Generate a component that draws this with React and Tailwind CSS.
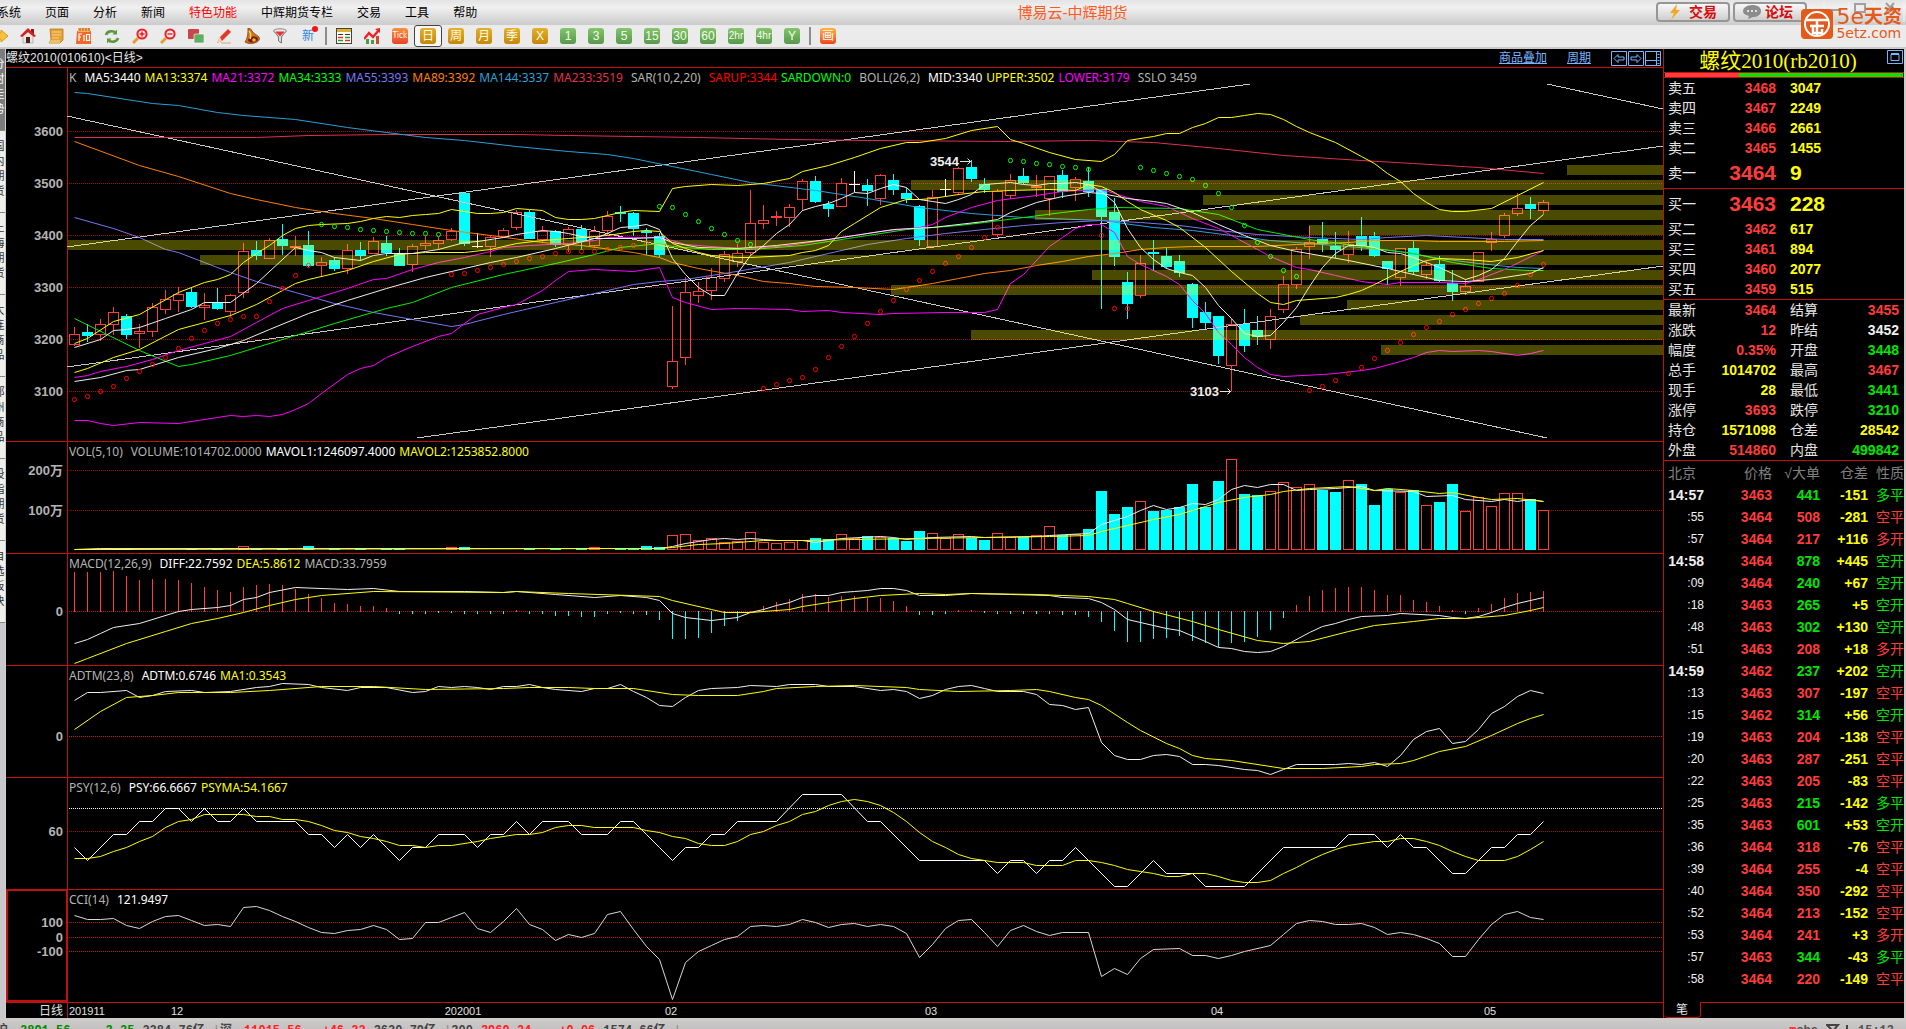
import React, { useState } from "react";

// bar i sits at x = 74 + 13 * i, prices are already in screen units
const barX = (i) => 74 + 13 * i;

// [kind, high, open/close top, open/close bottom, low, volume top]
const bars = [
  ["r", 327, 334, 345, 346, 549], ["c", 324, 332, 336, 342, 549], ["r", 319, 324, 335, 341, 549],
  ["r", 307, 312, 325, 335, 548], ["c", 314, 316, 335, 339, 548], ["r", 324, 331, 334, 348, 549],
  ["r", 303, 307, 332, 337, 549], ["r", 290, 299, 310, 314, 549], ["r", 287, 294, 301, 312, 549],
  ["c", 287, 292, 307, 308, 549], ["r", 293, 305, 308, 320, 549], ["c", 288, 303, 309, 310, 549],
  ["r", 294, 295, 312, 317, 549], ["r", 243, 251, 293, 298, 546], ["c", 241, 250, 256, 260, 549],
  ["r", 238, 240, 259, 259, 549], ["c", 224, 239, 246, 255, 549], ["r", 236, 246, 248, 256, 549],
  ["c", 231, 245, 266, 267, 546], ["r", 257, 262, 266, 276, 549], ["c", 257, 260, 269, 271, 549],
  ["r", 244, 250, 269, 274, 549], ["c", 242, 250, 256, 261, 549], ["r", 237, 241, 254, 254, 549],
  ["c", 236, 243, 253, 256, 549], ["c", 248, 253, 266, 266, 549], ["r", 244, 246, 265, 272, 549],
  ["r", 236, 243, 246, 250, 549], ["r", 237, 240, 244, 249, 549], ["r", 228, 231, 240, 241, 547],
  ["c", 192, 193, 244, 246, 547], ["w", 233, 246, 247, 247, 549], ["r", 235, 237, 247, 257, 549],
  ["r", 228, 230, 237, 237, 549], ["r", 210, 212, 228, 230, 549], ["c", 210, 212, 239, 239, 549],
  ["r", 226, 231, 240, 243, 549], ["c", 230, 231, 245, 247, 549], ["r", 227, 229, 245, 252, 549],
  ["c", 225, 229, 242, 250, 549], ["r", 226, 231, 246, 247, 547], ["r", 211, 216, 231, 235, 549],
  ["c", 206, 212, 214, 222, 549], ["c", 212, 213, 229, 236, 549], ["c", 228, 231, 233, 255, 546],
  ["c", 233, 236, 255, 257, 547], ["r", 306, 361, 387, 389, 535], ["r", 277, 292, 358, 365, 534],
  ["r", 282, 291, 296, 303, 540], ["r", 268, 277, 291, 300, 538], ["r", 251, 254, 279, 282, 542],
  ["r", 244, 253, 262, 267, 541], ["r", 190, 223, 253, 255, 532], ["r", 205, 220, 224, 229, 542],
  ["r", 211, 216, 218, 226, 543], ["r", 204, 207, 218, 227, 542], ["r", 179, 181, 200, 211, 540],
  ["c", 176, 181, 202, 203, 538], ["c", 201, 204, 209, 217, 539], ["r", 178, 183, 207, 207, 534],
  ["w", 171, 184, 185, 191, 538], ["c", 179, 185, 191, 206, 536], ["r", 174, 175, 199, 205, 537],
  ["c", 174, 180, 190, 195, 538], ["c", 188, 193, 199, 203, 541], ["c", 205, 206, 240, 246, 531],
  ["r", 190, 197, 247, 248, 533], ["w", 179, 189, 190, 196, 538], ["r", 167, 168, 193, 195, 534],
  ["c", 160, 167, 179, 182, 538], ["c", 178, 184, 190, 193, 540], ["r", 189, 191, 235, 237, 533],
  ["r", 174, 180, 196, 199, 537], ["c", 168, 176, 183, 184, 537], ["r", 175, 186, 188, 197, 535],
  ["r", 176, 176, 199, 216, 526], ["c", 170, 175, 192, 198, 535], ["r", 177, 179, 188, 201, 534],
  ["c", 167, 181, 192, 197, 529], ["c", 189, 189, 217, 309, 491], ["c", 198, 212, 257, 266, 514],
  ["c", 272, 282, 304, 319, 507], ["r", 255, 263, 296, 298, 501], ["c", 240, 252, 254, 271, 511],
  ["c", 248, 256, 267, 269, 510], ["c", 255, 261, 273, 277, 507], ["c", 283, 284, 318, 328, 484],
  ["c", 302, 312, 323, 329, 507], ["c", 316, 316, 356, 364, 481], ["r", 319, 324, 366, 391, 459],
  ["c", 309, 324, 346, 352, 494], ["c", 316, 330, 337, 345, 495], ["r", 309, 316, 340, 349, 491],
  ["r", 276, 284, 310, 313, 482], ["r", 247, 249, 285, 289, 487], ["r", 226, 242, 247, 259, 484],
  ["c", 222, 239, 244, 252, 490], ["c", 232, 246, 250, 258, 492], ["r", 231, 244, 255, 263, 480],
  ["c", 217, 236, 246, 251, 484], ["c", 232, 236, 256, 257, 505], ["c", 261, 261, 269, 285, 489],
  ["r", 248, 248, 278, 286, 492], ["c", 241, 248, 272, 275, 490], ["r", 261, 265, 275, 279, 505],
  ["c", 256, 264, 281, 282, 502], ["c", 270, 283, 292, 301, 484], ["r", 279, 286, 292, 295, 511],
  ["r", 252, 252, 282, 282, 497], ["r", 232, 239, 243, 251, 506], ["r", 213, 215, 236, 238, 493],
  ["r", 193, 208, 214, 216, 493], ["c", 197, 204, 209, 219, 499], ["r", 200, 202, 211, 214, 510],
];

const bands = [
  [1567, 165], [911, 180], [1203, 195], [1035, 210], [1309, 225], [68, 240], [200, 255],
  [1092, 270], [891, 285], [1347, 300], [1300, 315], [971, 330], [1381, 345],
];

// first bar, colour, then one y per bar
const sar = [
  [0, "#ff0000", [399, 396, 391, 386, 378, 371, 364, 357, 348, 338, 330, 323, 319, 316, 316, 301, 288, 275, 265]],
  [19, "#00ff00", [224, 226, 227, 229, 230, 231, 232, 233, 233, 234]],
  [29, "#ff0000", [274, 273, 270, 267, 264, 261, 258, 256, 253, 251, 251, 251, 249, 247, 245, 243]],
  [45, "#00ff00", [206, 207, 214, 221, 228, 234, 240, 244]],
  [53, "#ff0000", [388, 384, 380, 377, 369, 357, 346, 336, 323, 311, 300, 289, 280, 271, 263, 256, 247, 237, 227]],
  [72, "#00ff00", [160, 161, 163, 164, 166, 167, 169]],
  [79, "#ff0000", [235, 308, 308]],
  [82, "#00ff00", [167, 170, 173, 176, 179, 185, 193, 207, 225, 242, 256, 270, 276]],
  [95, "#ff0000", [390, 386, 380, 373, 367, 358, 350, 342, 334, 327, 321, 314, 309, 303, 298, 293, 285, 274, 264]],
];

const priceLines = [
  // MA233, MA144, MA89, MA55, MA34
  ["#e03050", "0,137 14,137 18,135 24,134 34,134 38,135 43,136 48,137 55,139 61,140 72,141 78,140 83,142 88,148 93,155 99,160 103,163 108,167 113,173"],
  ["#2ba0d8", "0,92 1,93 4,99 6,103 8,105 11,112 13,115 17,119 21,127 24,132 27,137 30,140 34,146 38,151 41,154 43,158 46,166 49,174 52,182 57,190 61,198 65,207 69,213 73,217 79,220 83,227 86,230 89,235 92,240 95,243 98,246 102,251 105,258 108,263 111,267 113,268"],
  ["#ff8000", "0,141 5,165 8,176 12,193 14,199 17,207 20,213 23,218 26,224 29,230 32,235 36,242 39,245 43,252 45,257 46,262 48,268 51,275 53,281 55,283 57,286 60,287 63,289 64,287 66,283 68,278 70,273 72,270 74,265 76,261 78,256 80,253 82,249 84,247 86,246 91,246 94,244 98,242 100,240 103,240 105,241 110,241 113,240"],
  ["#7878f0", "0,217 3,228 5,237 7,249 8,252 10,262 12,272 14,281 17,292 20,303 23,312 26,319 29,326 30,324 33,314 37,302 40,293 43,284 45,281 47,279 50,273 55,262 58,253 61,244 64,238 67,233 70,229 73,225 76,222 79,220 82,222 85,225 88,230 91,234 95,237 99,239 101,237 104,235 107,237 110,239 113,239"],
  ["#00f000", "0,318 5,350 8,366 9,364 12,355 14,347 17,335 20,323 24,308 26,302 29,287 33,274 37,263 40,254 42,247 45,243 46,246 49,249 52,249 56,245 60,237 64,229 68,225 70,222 73,217 76,212 78,209 80,207 85,208 88,214 91,229 95,239 98,244 100,248 103,253 106,262 109,268 112,270 113,270"],
  // MA21, MA13, MA5
  ["#ff00ff", "0,377 1,375 2,371 4,366 6,359 8,350 10,343 12,336 14,322 16,308 18,300 19,296 21,288 23,279 24,278 26,269 28,262 30,257 32,251 33,247 35,245 38,243 40,240 41,237 45,237 46,240 47,244 50,247 52,248 55,245 59,237 62,231 65,227 66,224 67,217 69,207 71,200 74,195 76,191 79,189 81,197 82,201 84,206 86,218 88,228 91,249 92,256 94,267 95,269 97,275 99,281 101,284 102,282 105,282 107,283 108,279 110,269 113,250"],
  ["#ffff00", "0,372 1,368 3,357 5,349 8,329 10,322 12,315 14,304 17,283 18,279 20,273 21,270 23,261 25,254 27,252 30,252 32,249 34,243 36,240 38,238 41,235 43,231 44,230 45,231 46,243 47,248 48,252 49,255 51,257 52,257 55,255 56,252 57,250 58,245 59,231 60,223 62,207 64,199 65,199 66,198 68,194 70,191 72,190 75,189 77,190 78,184 79,186 80,192 81,201 82,209 84,220 85,227 87,247 89,271 91,293 92,302 93,304 94,300 97,297 98,294 99,290 100,284 102,271 103,265 104,260 105,258 107,259 109,261 111,257 113,250"],
  ["#f0f0f0", "0,347 2,339 3,330 4,329 5,327 7,318 9,309 10,302 12,302 14,283 17,247 18,250 19,252 20,257 22,260 23,255 24,253 26,253 27,251 28,249 30,242 31,241 33,237 34,234 35,232 36,230 37,231 38,233 39,236 40,238 41,233 42,227 43,226 44,224 45,229 46,258 47,274 48,287 49,295 50,295 51,273 52,255 53,245 54,233 55,224 56,210 57,206 58,203 59,198 60,192 61,193 62,188 63,184 64,187 65,199 66,201 67,203 68,199 69,194 70,184 71,183 72,182 73,184 74,185 75,183 76,183 77,182 78,184 79,191 80,202 81,228 82,247 83,259 84,268 85,272 86,275 87,287 88,305 89,318 90,333 91,336 92,335 93,322 94,307 95,286 96,267 97,253 98,245 99,245 100,247 101,252 102,253 103,257 104,262 105,267 106,273 107,279 108,275 109,269 110,258 111,241 112,225 113,214"],
  // BOLL mid, upper, lower
  ["#f0f0f0", "0,381 2,377 4,370 5,369 8,357 11,348 13,340 15,329 18,313 21,300 24,288 27,277 30,268 32,262 34,257 37,248 40,238 43,238 45,237 46,242 48,247 51,248 54,245 58,239 63,229 66,227 70,221 71,219 72,212 74,202 76,196 78,192 79,193 81,198 83,201 84,203 86,212 88,224 90,235 92,245 94,251 98,260 101,268 103,274 105,280 107,281 109,279 112,273 113,267"],
  ["#ffff00", "0,343 1,338 3,321 5,314 8,292 10,282 11,279 12,274 13,262 14,253 15,245 16,235 17,228 18,225 19,224 21,223 22,221 23,218 24,216 25,217 26,215 27,214 28,213 29,209 30,211 31,213 32,213 33,212 34,208 35,209 36,210 37,217 38,219 39,219 40,218 41,215 42,212 43,210 45,211 46,188 47,186 49,184 51,185 53,183 55,178 56,171 58,165 60,157 62,148 64,142 65,142 67,138 69,130 71,126 72,139 73,143 75,152 77,159 79,161 80,154 81,140 83,136 84,133 85,133 86,127 87,123 88,117 89,117 90,115 91,113 92,114 93,119 94,126 95,132 97,142 99,156 100,163 101,173 102,181 103,193 104,202 105,209 106,211 107,211 109,208 111,195 113,182"],
  ["#ff00ff", "0,420 1,420 2,423 3,425 5,422 8,423 11,417 12,415 13,416 14,415 15,416 16,414 17,409 18,403 19,393 21,374 22,368 23,365 24,357 26,346 28,336 29,333 30,323 31,314 33,307 34,304 36,290 37,280 38,271 40,269 43,271 45,267 46,297 47,302 49,309 51,308 55,309 56,311 58,310 59,312 62,314 63,313 67,312 70,312 71,309 72,283 73,274 75,246 76,237 77,228 78,224 79,224 80,232 81,256 82,264 83,270 84,276 85,284 86,300 87,313 88,332 89,344 90,357 91,367 92,374 93,376 96,374 97,373 99,370 100,368 102,361 103,357 104,352 105,350 106,351 108,350 109,351 111,355 112,353 113,350"],
];

const trendLines = [
  [67, 116, 1547, 438], [67, 247, 1250, 84], [67, 367, 1663, 146], [417, 438, 1663, 266], [1547, 84, 1663, 109],
];

const volLines = [
  ["#f0f0f0", "0,549 45,548 46,546 47,543 48,541 49,539 50,538 51,539 52,538 53,539 54,540 56,540 57,542 59,538 62,536 63,537 64,539 66,537 69,536 70,537 74,536 75,535 78,533 79,524 80,520 81,516 82,510 83,505 84,509 85,507 86,503 87,504 88,499 89,489 90,485 91,487 92,484 93,484 94,490 95,489 97,488 99,486 100,490 103,491 104,496 106,495 107,499 109,501 110,499 111,501 112,499 113,501"],
  ["#ffff00", "0,549 2,548 45,548 46,547 48,544 50,543 53,540 56,540 60,539 65,538 70,537 75,536 78,535 79,531 81,525 83,519 85,514 86,510 87,506 88,502 90,497 92,494 93,491 95,488 98,486 100,490 101,488 103,490 105,493 106,492 108,497 109,499 111,498 113,501"],
];

const macdHist = [
  572, 572, 572, 571, 576, 580, 579, 579, 580, 583, 587, 590, 592, 587, 585, 584, 585, 589, 594, 598, 603, 604, 606,
  606, 608, 613, 613, 613, 612, 612, 613, 613, 613, 613, 610, 613, 613, 615, 615, 616, 616, 613, 612, 613, 614, 619,
  638, 638, 637, 632, 625, 620, 611, 606, 602, 599, 594, 594, 597, 596, 596, 598, 598, 601, 606, 614, 614, 613, 610,
  610, 612, 613, 613, 613, 613, 613, 614, 614, 616, 621, 630, 641, 641, 638, 637, 635, 640, 642, 646, 642, 641, 636,
  629, 617, 605, 596, 590, 588, 587, 587, 590, 595, 595, 600, 602, 606, 610, 613, 608, 604, 598, 593, 592, 591,
];

const macdLines = [
  ["#f0f0f0", "0,643 1,639 2,633 3,627 5,623 8,611 9,609 11,607 12,605 13,599 14,597 15,592 17,587 21,589 23,588 25,591 30,591 33,592 34,591 37,594 40,597 42,595 44,597 45,600 46,613 47,617 49,620 51,617 52,612 53,609 54,605 55,602 56,597 57,595 58,595 59,592 60,591 61,590 62,588 63,588 64,590 65,595 67,595 69,593 72,594 75,595 76,597 78,598 79,602 80,609 81,619 84,628 85,630 87,641 88,647 89,648 90,651 91,652 92,651 93,646 95,632 96,626 97,623 98,619 99,616 101,615 102,613 105,615 106,617 107,618 108,616 109,612 110,607 111,603 113,597"],
  ["#ffff00", "0,663 1,658 4,643 7,631 9,623 11,618 13,612 15,605 17,599 19,595 23,591 33,592 34,591 38,593 45,596 46,600 49,609 50,612 52,612 55,609 56,606 58,602 60,598 62,595 65,593 67,594 69,593 74,594 78,596 80,599 81,603 83,611 86,621 88,629 91,640 93,643 95,641 98,631 100,625 103,621 105,618 107,618 110,615 112,610 113,607"],
];

const adtmLines = [
  ["#f0f0f0", "0,700 1,692 2,692 4,690 5,697 6,695 7,691 9,690 10,692 12,691 14,687 15,686 16,683 18,684 19,687 21,690 22,687 24,687 26,692 27,691 28,686 29,687 30,686 31,687 32,689 33,686 34,686 35,684 36,687 37,689 39,691 40,688 41,688 42,684 43,691 44,697 45,705 46,706 47,697 48,690 49,688 51,687 52,685 54,686 55,684 57,684 58,686 60,686 62,690 63,689 64,691 65,698 66,695 67,689 68,686 69,685 70,688 71,691 73,691 74,694 75,704 76,705 77,709 78,707 79,742 80,755 81,759 82,759 83,755 84,754 85,756 86,764 87,764 88,765 90,769 91,770 92,774 93,769 94,764 97,764 98,763 99,764 100,762 101,766 102,755 103,739 104,731 105,728 106,743 107,741 108,729 109,713 110,706 111,696 112,690 113,693"],
  ["#ffff00", "0,729 2,711 4,697 6,695 8,692 12,692 15,690 19,686 23,686 27,689 33,688 35,687 38,687 40,688 43,688 46,694 48,695 51,695 53,691 54,688 57,686 60,685 64,687 65,689 68,691 72,690 74,689 75,691 77,697 78,699 79,705 81,722 82,730 84,743 85,748 86,755 87,758 89,760 93,768 96,768 99,766 100,764 102,763 103,760 105,751 107,746 109,735 111,723 112,718 113,714"],
];

const psyLines = [
  ["#ffffff", "0,847 1,860 3,834 4,834 5,821 6,821 7,808 8,808 9,821 10,808 11,821 12,821 13,808 14,821 17,821 18,834 19,834 20,847 21,834 22,847 23,834 24,847 25,860 26,847 27,847 28,834 30,834 31,847 32,834 33,834 34,821 35,834 36,821 38,821 39,834 41,834 42,821 43,821 44,834 45,847 46,860 47,847 48,847 49,834 50,834 51,821 54,821 56,794 59,794 61,821 62,821 65,860 70,860 71,873 72,860 73,860 74,873 75,860 76,860 77,847 80,886 81,886 83,860 84,873 86,873 87,886 90,886 93,847 97,847 98,834 100,834 101,847 102,834 103,847 104,847 106,873 107,873 109,847 110,847 111,834 112,834 113,821"],
  ["#ffff00", "0,858 1,858 2,856 3,851 4,847 5,841 6,836 7,827 8,821 9,819 10,814 13,814 14,816 15,816 16,819 17,819 18,821 19,825 20,830 21,832 22,836 23,838 24,841 25,845 26,845 27,847 28,845 29,845 31,841 32,838 34,834 35,834 36,832 37,827 38,825 39,825 40,827 43,827 44,830 45,832 46,836 47,838 48,843 49,845 50,845 51,841 52,834 53,831 54,825 55,821 56,814 57,811 58,805 59,801 60,799 61,801 62,805 63,812 64,821 65,832 66,841 67,847 68,854 69,858 70,860 71,862 73,862 74,865 76,865 77,860 78,860 79,862 80,865 81,869 82,871 83,873 84,876 85,876 86,873 87,873 88,876 89,880 90,882 91,882 92,880 93,873 94,867 95,860 96,854 97,849 98,845 100,841 101,841 102,838 103,838 104,841 105,845 106,851 107,856 108,860 110,860 111,856 112,849 113,841"],
];

const cciLines = [
  ["#d8d8d8", "0,915 1,919 2,919 3,918 4,925 5,928 6,921 7,916 8,915 9,920 10,925 11,924 12,926 13,907 14,906 15,910 16,916 17,921 18,927 19,932 20,933 21,930 22,929 23,925 24,929 25,939 26,938 27,922 28,922 29,917 30,912 31,928 32,932 33,921 34,908 35,924 36,929 37,940 38,934 39,937 40,933 41,914 42,911 43,929 44,946 45,959 46,999 47,962 48,951 49,945 50,939 51,936 52,926 53,925 54,926 55,924 56,919 57,922 58,927 59,924 60,923 61,926 62,924 63,926 64,933 65,957 66,944 67,928 68,920 69,919 70,932 71,946 72,930 73,925 74,931 75,935 76,932 78,932 79,976 80,968 81,974 82,958 83,949 85,948 86,955 87,955 88,958 89,955 90,951 92,945 93,934 94,923 95,920 96,921 97,924 98,924 99,923 100,927 101,934 102,932 103,934 104,938 105,943 106,956 107,956 108,939 109,924 110,914 111,911 112,917 113,919"],
];

const toPoints = (text) =>
  text
    .split(" ")
    .map((p) => {
      const [i, y] = p.split(",");
      return `${barX(Number(i)) + 0.5},${Number(y) + 0.5}`;
    })
    .join(" ");

function Lines({ lines }) {
  return lines.map(([color, text]) => (
    <polyline key={color + text.slice(0, 12)} points={toPoints(text)} fill="none" stroke={color} />
  ));
}

// dotted levels with their scale labels in the gutter
function Levels({ levels }) {
  return levels.map(([label, y, color = "#b00000"]) => (
    <g key={y}>
      <line x1="69" x2="101%" y1={y + 0.5} y2={y + 0.5} stroke={color} strokeDasharray="1 1" />
      <text x="63" y={y + 5} textAnchor="end" fill="#b4b4b4" fontSize="13" fontWeight="bold">
        {label}
      </text>
    </g>
  ));
}

function Panel({ top, className, legend, selected, children }) {
  return (
    <section className="relative border-t border-[#c01010]">
      <svg className={`block w-full ${className}`}>
        <g transform={`translate(-6 ${-top})`}>
          <line x1="67.5" x2="67.5" y1={top} y2={top + 400} stroke="#c01010" />
          {children}
          {selected && <rect x="7" y={top} width="60" height="111" fill="none" stroke="#c01010" strokeWidth="2" />}
        </g>
      </svg>
      <p className="absolute left-[63px] top-0.5 flex gap-1 whitespace-nowrap font-['Noto_Sans','DejaVu_Sans',sans-serif] text-xs leading-4">
        {legend.map(([text, color]) => (
          <span key={text} className={color}>
            {text}
          </span>
        ))}
      </p>
    </section>
  );
}

function Candle({ i, bar }) {
  const [kind, high, top, bottom, low] = bar;
  const x = barX(i);
  if (kind === "c") {
    return (
      <g fill="#00ffff">
        <rect x={x} y={high} width="1" height={low - high} />
        <rect x={x - 5} y={top} width="11" height={bottom - top} />
      </g>
    );
  }
  if (kind === "w") {
    return (
      <g fill="#ffffff">
        <rect x={x} y={high} width="1" height={low - high + 1} />
        <rect x={x - 5} y={top} width="11" height="1" />
      </g>
    );
  }
  return (
    <g>
      <rect x={x} y={high} width="1" height={top - high} fill="#ff3c3c" />
      <rect x={x} y={bottom} width="1" height={Math.max(low - bottom, 0)} fill="#ff3c3c" />
      <rect x={x - 4.5} y={top + 0.5} width="10" height={Math.max(bottom - top - 1, 1)} fill="none" stroke="#ff3c3c" />
    </g>
  );
}

const menus = ["系统", "页面", "分析", "新闻", "特色功能", "中辉期货专栏", "交易", "工具", "帮助"];

const tools = [
  {
    name: "返回",
    art: <path d="M0 5h9V2l7 6-7 6v-3H0z" fill="#f5c33b" stroke="#d99a1c" />,
  },
  {
    name: "首页",
    art: (
      <>
        <path d="M3 8v7h10V8L8 4z" fill="#e8e4e0" stroke="#999" strokeWidth="0.6" />
        <path d="M11 1h3v5h-3z" fill="#8d1c1c" />
        <path d="M8 0L0 8l2 1 6-5 6 5 2-1z" fill="#d42020" />
        <path d="M6 9h4v6H6z" fill="#4a2418" />
      </>
    ),
  },
  {
    name: "公告",
    art: (
      <>
        <path d="M2 1h13v11l-3 3H1l2-3z" fill="#e3a136" stroke="#b87a1c" strokeWidth="0.8" />
        <path d="M4 4h9M4 7h9M4 10h7" stroke="#f8d48b" />
        <path d="M1 15l2-3h9v3z" fill="#f0bf63" />
      </>
    ),
  },
  {
    name: "基本资料",
    art: (
      <>
        <path d="M1 3h14v13H0z" fill="#f0692a" />
        <path d="M2 0h12v4H2z" fill="#f4b25e" />
        <path d="M4 0v3M7 0v3M10 0v3M13 0v3" stroke="#b84c14" />
        <path d="M3 13V6h3M3 9h2M8 7v6M10.500 6.500h3v6h-3z" fill="none" stroke="#fff" strokeWidth="1.200" />
      </>
    ),
  },
  {
    name: "刷新",
    art: (
      <g fill="none" stroke="#5a9a3c" strokeWidth="2.600">
        <path d="M2 7c1-4 7-5 10-2" />
        <path d="M14 10c-1 4-7 5-10 2" />
        <path d="M13 1.500v5H8.500zM3 15.500v-5h4.500z" fill="#5a9a3c" stroke="none" />
      </g>
    ),
  },
  {
    name: "放大",
    art: (
      <>
        <circle cx="10" cy="6" r="4.600" fill="#fbe5e0" stroke="#e8202a" strokeWidth="2" />
        <path d="M10 3.500v5M7.500 6h5" stroke="#e8202a" strokeWidth="1.400" />
        <path d="M6 10l-5 5" stroke="#eb9a2c" strokeWidth="3" />
      </>
    ),
  },
  {
    name: "缩小",
    art: (
      <>
        <circle cx="10" cy="6" r="4.600" fill="#fbe5e0" stroke="#e8202a" strokeWidth="2" />
        <path d="M7.500 6h5" stroke="#e8202a" strokeWidth="1.400" />
        <path d="M6 10l-5 5" stroke="#eb9a2c" strokeWidth="3" />
      </>
    ),
  },
  {
    name: "叠加",
    art: (
      <>
        <rect x="0" y="1" width="11" height="10" rx="1" fill="#c9464c" />
        <rect x="6" y="6" width="10" height="9" rx="1" fill="#5fae62" stroke="#fff" strokeWidth="0.600" />
      </>
    ),
  },
  {
    name: "画线",
    art: (
      <>
        <path d="M1 15l3-6 8-8 3 3-9 9z" fill="#e2392a" />
        <path d="M1 15l3-6 2 4z" fill="#f6d7a8" />
        <path d="M5 15h10" stroke="#d9a07a" />
      </>
    ),
  },
  {
    name: "预警",
    art: (
      <>
        <path d="M4 0c2 0 3 1 4 3 2 3 5 4 7 6 1 2 0 4-2 5-4 2-9 2-12 0 3-4 3-9 3-14z" fill="#c9741a" stroke="#7c3f0c" strokeWidth="0.800" />
        <ellipse cx="9" cy="11.500" rx="5" ry="3" transform="rotate(-12 9 11.500)" fill="#7a1d10" />
        <circle cx="10" cy="12" r="1.800" fill="#f2b53a" />
        <path d="M5 3c2 2 2 5 1 8" stroke="#fbd36a" strokeWidth="1.500" fill="none" />
      </>
    ),
  },
  {
    name: "选股",
    art: (
      <>
        <path d="M2 3h12L9.500 9v6l-3-2V9z" fill="#d8d8d8" stroke="#777" />
        <ellipse cx="8" cy="3" rx="6.500" ry="2.200" fill="#e8e8e8" stroke="#888" />
        <path d="M3.500 3.500h9L8.500 8h-1z" fill="#f03030" />
      </>
    ),
  },
];

const periods = ["周", "月", "季", "X"];
const minutes = ["1", "3", "5", "15", "30", "60", "2hr", "4hr", "Y"];

function ToolCell({ name, children }) {
  return (
    <button type="button" aria-label={name} className="flex h-[22px] w-7 shrink-0 items-center justify-center">
      {children}
    </button>
  );
}

function Header() {
  return (
    <header className="relative shrink-0 overflow-hidden">
      <div className="flex h-[25px] items-center bg-linear-to-b from-[#e4e4e4] via-[#f0f0f0] via-30% to-[#cbcbcb]">
        <nav className="-ml-[15px] flex shrink-0 text-xs text-black">
          {menus.map((m) => (
            <button key={m} type="button" className={m === "特色功能" ? "px-3 text-[#ff0000]" : "px-3"}>
              {m}
            </button>
          ))}
        </nav>
        <h1 className="flex-1 text-center text-[15px] leading-5 text-[#ff5a1e]">博易云-中辉期货</h1>
        <div className="flex h-full w-[250px] shrink-0 gap-[3px] pt-0.5 font-bold text-[#d80c0c]">
          <button type="button" className="flex h-5 w-[74px] items-center justify-center gap-2 rounded-sm border-2 border-[#969696] bg-linear-to-b from-[#f8f8f8] to-[#cfcfcf] text-sm">
            <svg viewBox="0 0 12 16" className="h-4 w-3">
              <path d="M8 0L1 9h4l-3 7 9-10H7z" fill="#f5a623" />
            </svg>
            交易
          </button>
          <button type="button" className="flex h-5 w-[74px] items-center justify-center gap-1 rounded-sm border-2 border-[#969696] bg-linear-to-b from-[#f8f8f8] to-[#cfcfcf] pr-1 text-sm">
            <svg viewBox="0 0 18 14" className="h-3.5 w-[18px]">
              <path d="M9 0c5 0 9 2 9 6s-4 6-8 6l-5 2 1-3c-3-1-6-2-6-5s4-6 9-6z" fill="#8c8c8c" />
              <circle cx="5" cy="6" r="1" fill="#fff" />
              <circle cx="9" cy="6" r="1" fill="#fff" />
              <circle cx="13" cy="6" r="1" fill="#fff" />
            </svg>
            论坛
          </button>
          <svg className="ml-3 h-5 w-[84px]" fill="none" stroke="#a0a0a0" strokeWidth="2" aria-hidden="true">
            <path d="M2 0v20M27 0v20M52 0v20M82 0v20" stroke="#f4f4f4" strokeWidth="1" />
            <path d="M9 8h10M33 2h10v8H33zM64 1l8 9M72 1l-8 9" />
          </svg>
        </div>
      </div>

      <div className="flex h-6 items-start border-b-2 border-[#cfc9c9] bg-[#ebebeb]">
        <div className="-ml-3.5 flex shrink-0">
          {tools.map((t) => (
            <ToolCell key={t.name} name={t.name}>
              <svg viewBox="0 0 16 16" className="h-4 w-4">
                {t.art}
              </svg>
            </ToolCell>
          ))}
          <ToolCell name="新">
            <span className="relative text-xs leading-4 text-[#2f86e0]">
              新
              <i className="absolute -right-1 -top-0.5 h-1.5 w-1.5 rounded-full bg-[#ff1010]" />
            </span>
          </ToolCell>
        </div>
        <div className="mx-[3px] mt-0.5 h-[18px] w-0.5 bg-[#8c8c8c]" />
        <ToolCell name="报价">
          <svg viewBox="0 0 16 16" className="h-4 w-4">
            <rect x="0.5" y="0.5" width="15" height="15" fill="#fffef0" stroke="#444" />
            <path d="M1 2.500h14" stroke="#e0b030" strokeWidth="3" />
            <path d="M2 6.500h5M9 6.500h5" stroke="#333" />
            <path d="M2 9.500h5M9 12.500h5" stroke="#e03030" strokeWidth="1.500" />
            <path d="M2 12.500h5M9 9.500h5" stroke="#2c9a2c" strokeWidth="1.500" />
          </svg>
        </ToolCell>
        <ToolCell name="分时">
          <svg viewBox="0 0 16 16" className="h-4 w-4">
            <path d="M2 11h3v5H2zM7 12h3v4H7z" fill="#4d9a45" />
            <path d="M12 8h3v8h-3z" fill="#c94c2c" />
            <path d="M0 11l5-6 4 4 6-7" fill="none" stroke="#f02020" strokeWidth="2.400" />
            <path d="M16 0v5l-5-4z" fill="#f02020" />
          </svg>
        </ToolCell>
        <ToolCell name="Tick">
          <span className="h-4 w-4 rounded-[3px] bg-linear-to-b from-[#f5923a] to-[#e8402a] text-center font-['DejaVu_Sans_Condensed',sans-serif] text-[8px] leading-4 text-white">
            Tick
          </span>
        </ToolCell>
        <button type="button" aria-label="日线" className="flex h-[22px] w-7 shrink-0 items-center justify-center rounded-[3px] border border-[#444] bg-[#f8f8f8]">
          <span className="h-4 w-4 rounded-[3px] bg-linear-to-b from-[#e3b02c] to-[#c48708] text-center text-xs leading-4 text-[#fffbe0]">日</span>
        </button>
        {periods.map((p) => (
          <ToolCell key={p} name={p}>
            <span className="h-4 w-4 rounded-[3px] bg-linear-to-b from-[#e3b02c] to-[#c48708] text-center text-xs leading-4 text-[#fffbe0]">{p}</span>
          </ToolCell>
        ))}
        {minutes.map((p) => (
          <ToolCell key={p} name={p}>
            <span
              className={`h-4 w-4 rounded-[3px] bg-linear-to-b from-[#84c66c] to-[#57984c] text-center leading-4 text-[#f4ffe8] ${
                p.length > 2 ? "text-[10px]" : "text-xs"
              }`}
            >
              {p}
            </span>
          </ToolCell>
        ))}
        <div className="mx-[3px] mt-0.5 h-[18px] w-0.5 bg-[#8c8c8c]" />
        <ToolCell name="画">
          <span className="h-4 w-4 rounded-[3px] bg-linear-to-b from-[#ffb340] to-[#ee4020] text-center text-xs leading-4 text-white">画</span>
        </ToolCell>
      </div>

      {/* brand mark over the window buttons */}
      <div className="absolute right-1 top-2 flex items-center gap-[3px] text-[#e35a1a]">
        <svg viewBox="0 0 32 30" className="h-[30px] w-8">
          <rect width="32" height="30" rx="4" fill="#e35a1a" />
          <circle cx="16" cy="15" r="12" fill="none" stroke="#fff" strokeWidth="2" />
          <path d="M5 11h22M9 17h14M16 11v16M12 17v7h9v-4" fill="none" stroke="#fff" strokeWidth="2.500" />
        </svg>
        <div className="flex flex-col">
          <span className="flex items-center text-[19px] font-bold leading-[18px]">
            <span className="font-['DejaVu_Sans',sans-serif] text-[22px] font-normal">5e</span>天资
          </span>
          <span className="font-['DejaVu_Sans',sans-serif] text-sm leading-[14px]">5etz.com</span>
        </div>
      </div>
    </header>
  );
}

const sideTabs = ["分时走势", "国内期货", "上海期货", "大连商品", "郑州商品", "股指期货", "自选板块"];

function SideTabs() {
  return (
    <nav className="flex w-1.5 shrink-0 flex-col overflow-hidden border-r border-[#d0d0d0] bg-[#c8c8cc]">
      {sideTabs.map((t, i) => (
        <button
          key={t}
          type="button"
          className={`flex h-[82px] w-full justify-end overflow-hidden border-b border-[#888] pt-2 text-[11px] leading-[15px] ${
            i === 0 ? "bg-[#7c7c7c] text-white" : "bg-[#f0efea] text-[#333]"
          }`}
        >
          <span className="w-3 shrink-0">{t}</span>
        </button>
      ))}
    </nav>
  );
}

const grey = "text-[#b4b4b4]";
const yellow = "text-[#ffff00]";

function Charts() {
  return (
    <main className="flex min-w-0 flex-1 flex-col bg-black">
      <div className="flex h-[18px] items-center justify-between text-xs">
        <h2 className="text-[#e6e6e6]">螺纹2010(010610)&lt;日线&gt;</h2>
        <div className="flex items-center gap-5 text-[#78b4ff]">
          <a href="#overlay" className="underline">商品叠加</a>
          <a href="#period" className="underline">周期</a>
          <svg className="mr-px h-[15px] w-[51px]" fill="none" stroke="#78b4ff">
            <path d="M.5.5h15v14H.5zM17.500.5h15v14h-15zM34.500.5h15v14h-15z" />
            <path d="M3 7.500l4-4v2.500h6v3H7v2.500zM30 7.500l-4-4v2.500h-6v3h6v2.500z" />
            <path d="M34 9.500h11M45.500 1v13" />
            <path d="M47.500 3v11" strokeDasharray="1 2" strokeWidth="2" />
          </svg>
        </div>
      </div>

      <Panel
        top={68}
        className="h-[373px]"
        legend={[
          ["K", `${grey} mr-1`],
          ["MA5:3440", "text-white"],
          ["MA13:3374", yellow],
          ["MA21:3372", "text-[#ff00ff]"],
          ["MA34:3333", "text-[#00ff00]"],
          ["MA55:3393", "text-[#7878f0]"],
          ["MA89:3392", "text-[#ff8000]"],
          ["MA144:3337", "text-[#2ba0d8]"],
          ["MA233:3519", "text-[#e03050]"],
          ["SAR(10,2,20)", `${grey} ml-1 mr-1`],
          ["SARUP:3344", "text-[#ff0000]"],
          ["SARDOWN:0", "text-[#00ff00]"],
          ["BOLL(26,2)", `${grey} ml-1 mr-1`],
          ["MID:3340", "text-white"],
          ["UPPER:3502", yellow],
          ["LOWER:3179", "text-[#ff00ff]"],
          ["SSLO 3459", `${grey} ml-1`],
        ]}
      >
        <Levels levels={[[3600, 131], [3500, 183], [3400, 235], [3300, 287], [3200, 339], [3100, 391]]} />
        {bars.map((bar, i) => (
          <Candle key={i} i={i} bar={bar} />
        ))}
        {trendLines.map(([x1, y1, x2, y2]) => (
          <line key={`${x1}-${y1}`} x1={x1} y1={y1} x2={x2} y2={y2} stroke="#c8c8c8" shapeRendering="crispEdges" />
        ))}
        <Lines lines={priceLines} />
        {sar.map(([start, color, ys]) =>
          ys.map((y, n) => (
            <ellipse key={start + n} cx={barX(start + n) + 0.5} cy={y + 0.5} rx="2" ry="2.200" fill="none" stroke={color} />
          ))
        )}
        {bands.map(([x, y]) => (
          <rect key={y} x={x} y={y} width="100%" height="10" fill="#ffff00" fillOpacity="0.29" />
        ))}
        <g fill="#f0f0f0" fontSize="13" fontWeight="bold">
          <text x="930" y="166">3544</text>
          <text x="1190" y="396">3103</text>
        </g>
        <path d="M960 161.500h11M967.500 158.500l3 3-3 3M1220 391.500h11M1227.500 388.500l3 3-3 3" fill="none" stroke="#e0e0e0" />
      </Panel>

      <Panel
        top={442}
        className="h-[111px]"
        legend={[
          ["VOL(5,10)", `${grey} mr-1`],
          ["VOLUME:1014702.0000", grey],
          ["MAVOL1:1246097.4000", "text-white"],
          ["MAVOL2:1253852.8000", yellow],
        ]}
      >
        <Levels levels={[["200万", 470], ["100万", 510]]} />
        {bars.map(([kind, , , , , top], i) =>
          kind === "c" ? (
            <rect key={i} x={barX(i) - 5} y={top} width="11" height={550 - top} fill="#00ffff" />
          ) : (
            <rect key={i} x={barX(i) - 4.5} y={top + 0.5} width="10" height={549 - top} fill="#000" stroke="#ff3c3c" />
          )
        )}
        <Lines lines={volLines} />
      </Panel>

      <Panel
        top={554}
        className="h-[111px]"
        legend={[
          ["MACD(12,26,9)", `${grey} mr-1`],
          ["DIFF:22.7592", "text-white"],
          ["DEA:5.8612", yellow],
          ["MACD:33.7959", grey],
        ]}
      >
        <Levels levels={[[0, 611, "#d01010"]]} />
        {macdHist.map((y, i) => (
          <rect
            key={i}
            x={barX(i)}
            y={Math.min(y, 611)}
            width="1"
            height={Math.abs(y - 611) + 1}
            fill={y < 612 ? "#ff3c3c" : "#00ffff"}
          />
        ))}
        <Lines lines={macdLines} />
      </Panel>

      <Panel
        top={666}
        className="h-[111px]"
        legend={[["ADTM(23,8)", `${grey} mr-1`], ["ADTM:0.6746", "text-white"], ["MA1:0.3543", yellow]]}
      >
        <Levels levels={[[0, 736, "#d01010"]]} />
        <Lines lines={adtmLines} />
      </Panel>

      <Panel
        top={778}
        className="h-[111px]"
        legend={[["PSY(12,6)", `${grey} mr-1`], ["PSY:66.6667", "text-white"], ["PSYMA:54.1667", yellow]]}
      >
        <Levels levels={[["", 808, "#ffffff"], [60, 831]]} />
        <Lines lines={psyLines} />
      </Panel>

      <Panel top={890} className="h-28" selected legend={[["CCI(14)", `${grey} mr-1`], ["121.9497", "text-white"]]}>
        <Levels levels={[[100, 922, "#d01010"], [0, 937, "#d01010"], [-100, 951, "#d01010"]]} />
        <Lines lines={cciLines} />
      </Panel>

      <svg className="block h-4 w-full border-t border-[#c01010]" fill="#e0e0e0" fontSize="11">
        <line x1="61.5" x2="61.5" y1="0" y2="16" stroke="#c01010" />
        <text x="57" y="12" textAnchor="end" fontSize="12">日线</text>
        <text x="63" y="12">201911</text>
        <text x="171" y="12" textAnchor="middle">12</text>
        <text x="457" y="12" textAnchor="middle">202001</text>
        <text x="665" y="12" textAnchor="middle">02</text>
        <text x="925" y="12" textAnchor="middle">03</text>
        <text x="1211" y="12" textAnchor="middle">04</text>
        <text x="1484" y="12" textAnchor="middle">05</text>
      </svg>
    </main>
  );
}

const up = "text-[#ff3c3c]";
const down = "text-[#00e600]";

const sells = [["卖五", 3468, 3047], ["卖四", 3467, 2249], ["卖三", 3466, 2661], ["卖二", 3465, 1455], ["卖一", 3464, 9]];
const buys = [["买一", 3463, 228], ["买二", 3462, 617], ["买三", 3461, 894], ["买四", 3460, 2077], ["买五", 3459, 515]];

const stats = [
  ["最新", 3464, up, "结算", 3455, up],
  ["涨跌", 12, up, "昨结", 3452, "text-[#f0f0f0]"],
  ["幅度", "0.35%", up, "开盘", 3448, down],
  ["总手", 1014702, yellow, "最高", 3467, up],
  ["现手", 28, yellow, "最低", 3441, down],
  ["涨停", 3693, up, "跌停", 3210, down],
  ["持仓", 1571098, yellow, "仓差", 28542, yellow],
  ["外盘", 514860, up, "内盘", 499842, down],
];

const ticks = [
  ["14:57", 3463, 441, "-151", "多平", down],
  [":55", 3464, 508, "-281", "空平", up],
  [":57", 3464, 217, "+116", "多开", up],
  ["14:58", 3464, 878, "+445", "空开", down],
  [":09", 3464, 240, "+67", "空开", down],
  [":18", 3463, 265, "+5", "空开", down],
  [":48", 3463, 302, "+130", "空开", down],
  [":51", 3463, 208, "+18", "多开", up],
  ["14:59", 3462, 237, "+202", "空开", down],
  [":13", 3463, 307, "-197", "空平", up],
  [":15", 3462, 314, "+56", "空开", down],
  [":19", 3463, 204, "-138", "空平", up],
  [":20", 3463, 287, "-251", "空平", up],
  [":22", 3463, 205, "-83", "空平", up],
  [":25", 3463, 215, "-142", "多平", down],
  [":35", 3463, 601, "+53", "空开", down],
  [":36", 3464, 318, "-76", "空平", up],
  [":39", 3464, 255, "-4", "空平", up],
  [":40", 3464, 350, "-292", "空平", up],
  [":52", 3464, 213, "-152", "空平", up],
  [":53", 3464, 241, "+3", "多开", up],
  [":57", 3463, 344, "-43", "多平", down],
  [":58", 3464, 220, "-149", "空平", up],
];

function Depth({ rows }) {
  return (
    <table className="w-full table-fixed border-b border-[#c01010] font-bold">
      <tbody>
        {rows.map(([label, price, qty]) => {
          const best = label.endsWith("一");
          return (
            <tr key={label} className={best ? "h-[30px] text-[21px] leading-5" : "h-5 text-sm leading-5"}>
              <th className="w-9 p-0 pl-1 text-left text-sm font-normal text-[#e6e6e6]">{label}</th>
              <td className={`w-[76px] p-0 text-right ${up}`}>{price}</td>
              <td className={`p-0 pl-3.5 ${yellow}`}>{qty}</td>
            </tr>
          );
        })}
      </tbody>
    </table>
  );
}

function Quote() {
  const [tab, setTab] = useState("笔");

  return (
    <aside className="flex w-[243px] shrink-0 flex-col border-l border-r-2 border-l-[#c01010] border-r-[#cfc9c9] bg-black text-sm">
      <div className="relative flex h-6 items-center justify-center border-b border-[#c01010] pr-3">
        <h2 className="font-['Liberation_Serif','Noto_Sans_CJK_SC',serif] text-[21px] leading-5 text-[#ffff00]">螺纹2010(rb2010)</h2>
        <button type="button" aria-label="最大化" className="absolute right-px top-px">
          <svg className="block h-3.5 w-4" fill="none" stroke="#78b4ff">
            <path d="M.5.5h15v13H.5z" />
            <path d="M4 4.500h8v6H4zM4 3.500h8" />
          </svg>
        </button>
      </div>
      <div className="flex h-[5px] border-b border-[#c01010] px-px">
        <i className="w-[31%] bg-[#ff3c3c]" />
        <i className="flex-1 bg-[#00e600]" />
      </div>

      <Depth rows={sells} />
      <Depth rows={buys} />

      <table className="w-full table-fixed border-b border-[#c01010]">
        <tbody>
          {stats.map(([a, av, ac, b, bv, bc]) => (
            <tr key={a} className="h-5 leading-5">
              <th className="w-9 p-0 pl-1 text-left font-normal text-[#e6e6e6]">{a}</th>
              <td className={`w-[76px] p-0 text-right font-bold ${ac}`}>{av}</td>
              <th className="w-12 p-0 pl-3.5 text-left font-normal text-[#e6e6e6]">{b}</th>
              <td className={`p-0 pr-[5px] text-right font-bold ${bc}`}>{bv}</td>
            </tr>
          ))}
        </tbody>
      </table>

      <table className="mt-px w-full table-fixed text-right font-bold">
        <thead>
          <tr className="h-[22px] whitespace-nowrap leading-5 text-[#808080]">
            <th className="w-10 p-0 pl-1 text-left font-normal">北京</th>
            <th className="w-[68px] p-0 font-normal">价格</th>
            <th className="w-12 p-0 font-normal">√大单</th>
            <th className="w-12 p-0 font-normal">仓差</th>
            <th className="p-0 font-normal">性质</th>
          </tr>
        </thead>
        <tbody>
          {ticks.map(([time, price, lots, diff, kind, color]) => (
            <tr key={time + lots} className="h-[22px] leading-5">
              <td className={`p-0 text-[#f0f0f0] ${time.startsWith(":") ? "text-xs font-normal" : ""}`}>{time}</td>
              <td className={`p-0 ${up}`}>{price}</td>
              <td className={`p-0 ${color}`}>{lots}</td>
              <td className={`p-0 ${yellow}`}>{diff}</td>
              <td className={`p-0 font-normal ${color}`}>{kind}</td>
            </tr>
          ))}
        </tbody>
      </table>

      <div className="mt-auto flex h-4">
        <button
          type="button"
          onClick={() => setTab("笔")}
          aria-pressed={tab === "笔"}
          className="w-[37px] rounded-b-sm border-b border-r border-[#c01010] text-xs leading-[14px] text-[#e6e6e6]"
        >
          笔
        </button>
        <div className="flex-1 border-t border-[#c01010]" />
      </div>
    </aside>
  );
}

const indexes = [
  ["沪", "2891.56", "-3.25", "2284.76亿", "text-[#008a00]"],
  ["深", "11015.56", "+46.22", "3620.79亿", "text-[#ff2020]"],
  ["300", "3960.24", "+0.06", "1574.66亿", "text-[#ff2020]"],
];

function StatusBar() {
  return (
    <footer className="flex shrink-0 items-start justify-between overflow-hidden bg-linear-to-b from-[#d0cccc] to-[#b4b4b4] pt-[3px] font-['Liberation_Mono','Noto_Sans_CJK_SC',monospace] text-xs font-bold leading-5">
      <div className="-ml-1 flex">
        {indexes.map(([name, value, change, amount, color]) => (
          <p key={name} className="flex gap-2 whitespace-nowrap text-[#444]">
            <span className="min-w-4">{name}</span>
            <span className={color}>{value}</span>
            <span className={`w-14 text-right ${color}`}>{change}</span>
            <span>{amount}</span>
            <span className="font-normal text-[#888]">|</span>
          </p>
        ))}
      </div>
      <div className="flex gap-2 pr-3 text-[#555]">
        <span>
          <span className="text-[#ff2020]">m</span>obo
        </span>
        <svg className="mt-0.5 h-3.5 w-6" fill="none" stroke="#444" strokeWidth="2">
          <path d="M1 2h11L7 8zM7 8v6M17 6v8M21 2v12" />
        </svg>
        <span>15:13</span>
      </div>
    </footer>
  );
}

function App() {
  return (
    <div className="flex h-screen flex-col overflow-hidden bg-[#b4b4b4] font-['Liberation_Sans','Noto_Sans_CJK_SC',sans-serif]">
      <Header />
      <div className="flex shrink-0">
        <SideTabs />
        <Charts />
        <Quote />
      </div>
      <StatusBar />
    </div>
  );
}

export default App;
